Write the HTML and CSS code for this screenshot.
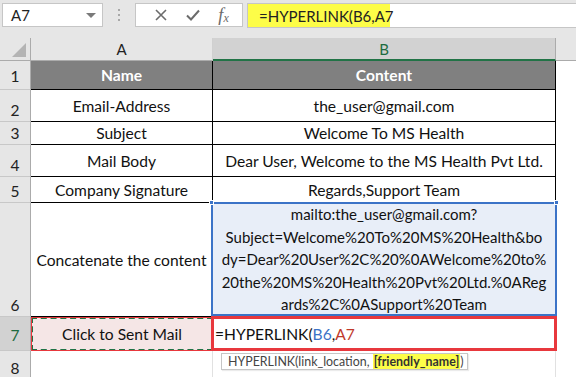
FILE: index.html
```html
<!DOCTYPE html>
<html>
<head>
<meta charset="utf-8">
<link rel="stylesheet" href="styles.css">
</head>
<body>
<div class="app">
  <div class="toolbar">
    <div class="namebox"><span>A7</span><span class="caret"></span></div>
    <div class="dots"><i></i><i></i><i></i></div>
    <div class="buttons">
      <svg class="ico" width="12" height="12" viewBox="0 0 12 12"><path d="M1 1L11 11M11 1L1 11" stroke="#6b6b6b" stroke-width="1.6" fill="none"/></svg>
      <svg class="ico" width="14" height="12" viewBox="0 0 14 12"><path d="M1 6.5L5 10.5L13 1.5" stroke="#6b6b6b" stroke-width="2" fill="none"/></svg>
      <span class="fx">f<sub>x</sub></span>
    </div>
    <div class="formula"><span class="fhl">=HYPERLINK(B6,A7</span></div>
  </div>
  <div class="sheet">
    <div class="corner"><span class="tri"></span></div>
    <div class="colh">A</div>
    <div class="colh colh-sel">B</div>
    <div class="colh-rest"></div>

    <div class="rowh rowh-mid">1</div>
    <div class="cell head">Name</div>
    <div class="cell head">Content</div>
    <div class="rest"></div>

    <div class="rowh">2</div>
    <div class="cell">Email-Address</div>
    <div class="cell">the_user@gmail.com</div>
    <div class="rest"></div>

    <div class="rowh">3</div>
    <div class="cell">Subject</div>
    <div class="cell">Welcome To MS Health</div>
    <div class="rest"></div>

    <div class="rowh">4</div>
    <div class="cell">Mail Body</div>
    <div class="cell">Dear User, Welcome to the MS Health Pvt Ltd.</div>
    <div class="rest"></div>

    <div class="rowh">5</div>
    <div class="cell">Company Signature</div>
    <div class="cell">Regards,Support Team</div>
    <div class="rest"></div>

    <div class="rowh">6</div>
    <div class="cell">Concatenate the content</div>
    <div class="cell wrap sel-blue">mailto:the_user@gmail.com?<br>Subject=Welcome%20To%20MS%20Health&amp;bo<br>dy=Dear%20User%2C%20%0AWelcome%20to%<br>20the%20MS%20Health%20Pvt%20Ltd.%0AReg<br>ards%2C%0ASupport%20Team<span class="h h-tl"></span><span class="h h-tr"></span></div>
    <div class="rest"></div>

    <div class="rowh rowh-sel rowh-mid">7</div>
    <div class="cell copy">Click to Sent Mail</div>
    <div class="cell edit">=HYPERLINK(<span class="ref-b">B6</span>,<span class="ref-a">A7</span>
      <div class="tip">HYPERLINK(link_location, <b>[friendly_name]</b>)</div>
    </div>
    <div class="rest"></div>

    <div class="rowh last">8</div>
    <div class="cell empty"></div>
    <div class="cell empty"></div>
    <div class="rest"></div>
  </div>
</div>
</body>
</html>
```

FILE: styles.css
```css
* { box-sizing: border-box; }
html, body { margin: 0; padding: 0; }
body {
  width: 576px;
  height: 377px;
  overflow: hidden;
  background: #e6e6e6;
  font-family: Lato, "Open Sans", sans-serif;
  font-size: 15px;
  color: #111;
}
.app { display: flex; flex-direction: column; }

.toolbar {
  height: 38px;
  display: flex;
  align-items: flex-start;
  padding-top: 3px;
  padding-left: 2px;
  background: #e6e6e6;
}
.namebox {
  width: 101px;
  height: 24px;
  background: #fff;
  border: 1px solid #c6c6c6;
  display: flex;
  align-items: center;
  justify-content: space-between;
  padding: 0 6px 0 8px;
  font-size: 15px;
  color: #222;
}
.caret {
  width: 0; height: 0;
  border-left: 5px solid transparent;
  border-right: 5px solid transparent;
  border-top: 5px solid #7a7a7a;
}
.dots {
  width: 32px;
  height: 24px;
  display: flex;
  flex-direction: column;
  align-items: center;
  justify-content: center;
  gap: 3px;
}
.dots i { display: block; width: 2px; height: 2px; background: #a8a8a8; }
.buttons {
  width: 108px;
  height: 24px;
  background: #fff;
  border: 1px solid #c6c6c6;
  display: flex;
  align-items: center;
  justify-content: space-around;
  padding: 0 4px 0 10px;
}
.fx {
  font-family: "Liberation Serif", serif;
  font-style: italic;
  font-size: 18px;
  color: #6b6b6b;
  line-height: 1;
}
.fx sub { font-size: 12px; vertical-align: -1px; }
.formula {
  flex: 1;
  margin-left: 4px;
  height: 25px;
  background: #fff;
  border-top: 1px solid #c6c6c6;
  border-bottom: 1px solid #c6c6c6;
  border-left: 1px solid #c6c6c6;
  display: flex;
}
.fhl {
  width: 142px;
  background: #fdfd48;
  padding-left: 11px;
  display: flex;
  align-items: center;
  font-size: 15px;
  color: #222;
}

.sheet {
  display: grid;
  grid-template-columns: 31px 182px 343px 20px;
  grid-template-rows: 23px 29px 32px 23px 32px 26px 114px 34px 28px;
  background: #fff;
}
.corner {
  background: #e6e6e6;
  border-right: 1px solid #ababab;
  border-bottom: 1px solid #ababab;
  position: relative;
}
.tri {
  position: absolute;
  right: 4px;
  bottom: 3px;
  width: 0; height: 0;
  border-left: 14px solid transparent;
  border-bottom: 14px solid #b4b4b4;
}
.colh {
  background: #e6e6e6;
  border-bottom: 1px solid #ababab;
  border-right: 1px solid #d0d0d0;
  display: flex;
  align-items: center;
  justify-content: center;
  font-size: 15px;
  color: #222;
}
.colh-sel {
  background: #d2d2d2;
  color: #1d6b40;
  border-bottom: 2px solid #217346;
  border-right: 1px solid #ababab;
}
.colh-rest { background: #e6e6e6; border-bottom: 1px solid #ababab; }

.rowh {
  background: #e6e6e6;
  border-right: 1px solid #ababab;
  border-bottom: 1px solid #c8c8c8;
  display: flex;
  align-items: flex-end;
  justify-content: center;
  padding-bottom: 2px;
  font-size: 15.5px;
  color: #222;
}
.rowh-mid { align-items: center; padding-bottom: 0; padding-top: 2px; }
.rowh-sel { background: #d2d2d2; color: #1d6b40; }
.rest { background: #fff; }

.cell {
  border-right: 1px solid #000;
  border-bottom: 1px solid #000;
  display: flex;
  align-items: center;
  justify-content: center;
  text-align: center;
  white-space: nowrap;
  position: relative;
  color: #111;
  font-size: 15.6px;
}
.head {
  background: #808080;
  color: #fff;
  font-weight: bold;
}
.wrap {
  font-size: 15px;
  line-height: 22.5px;
  background: #e8eef8;
}
.sel-blue::after {
  content: "";
  position: absolute;
  left: -2px; top: -1px; right: -2px; bottom: 0;
  border: 2px solid #3b73c7;
  pointer-events: none;
}
.h {
  position: absolute;
  width: 5px; height: 5px;
  background: #3b73c7;
  border: 1px solid #fff;
  z-index: 2;
}
.h-tl { left: -4px; top: -3px; }
.h-tr { right: -4px; top: -3px; }

.copy {
  background: #f5e6e6;
  border: 2px dashed #217346;
  outline: 1px solid #e8383d;
  outline-offset: -1px;
}
.edit {
  justify-content: flex-start;
  padding-left: 2px;
  background: #fff;
  overflow: visible;
}
.edit::after {
  content: "";
  position: absolute;
  left: -2px; top: -1px; right: -2px; bottom: -1px;
  border: 3px solid #e8383d;
  pointer-events: none;
}
.ref-b { color: #3b73c7; }
.ref-a { color: #c0392b; }
.tip {
  position: absolute;
  left: 8px;
  top: 36px;
  height: 17px;
  background: #fff;
  border: 1px solid #c6c6c6;
  font-size: 12.4px;
  line-height: 15px;
  color: #444;
  padding: 0 3px 0 6px;
  z-index: 3;
  box-shadow: 1px 1px 1px rgba(0,0,0,0.08);
}
.tip b {
  background: #fdfd48;
  color: #333;
  padding: 0 1px;
}
.empty { border-right: 1px solid #e1e1e1; border-bottom: none; }
.last { border-bottom: none; }
```
